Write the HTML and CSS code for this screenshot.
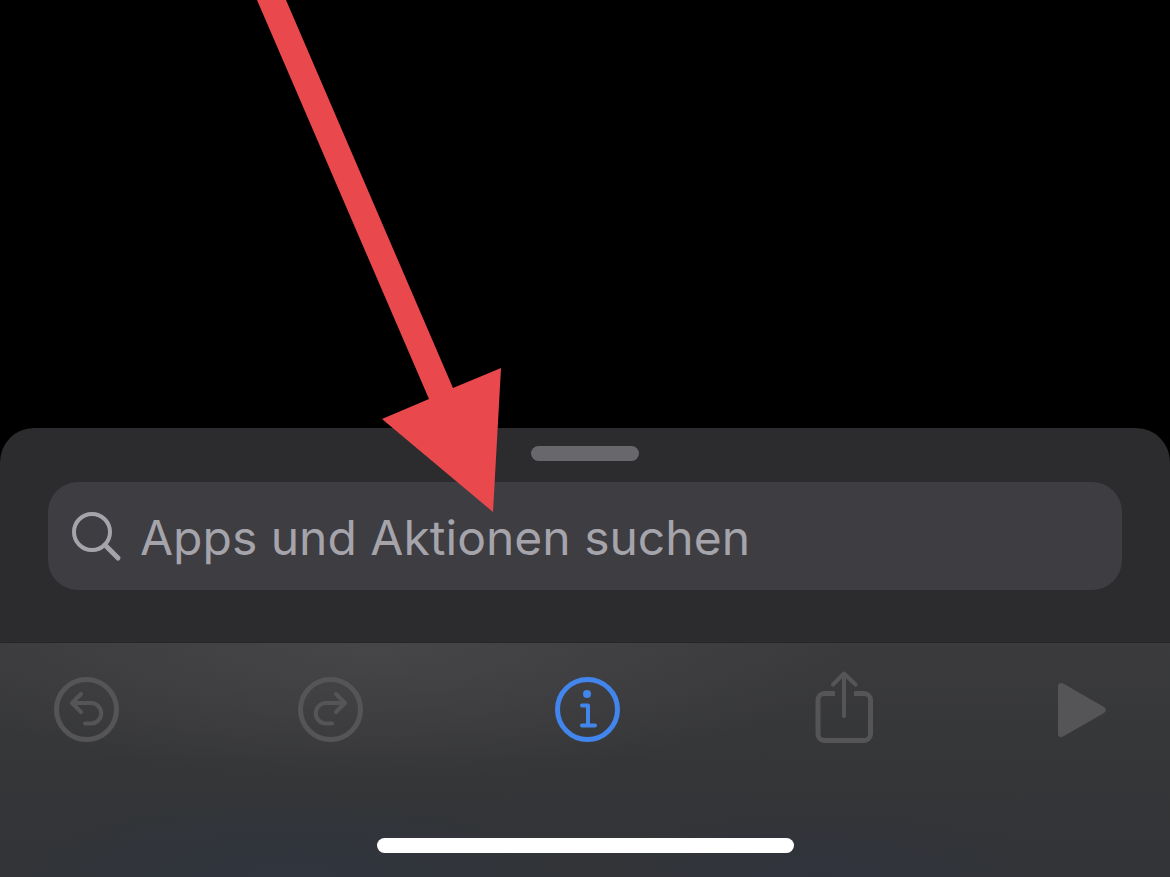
FILE: index.html
```
<!DOCTYPE html>
<html lang="de">
<head>
<meta charset="utf-8">
<meta name="viewport" content="width=device-width, initial-scale=1">
<title>Kurzbefehle</title>
<link rel="stylesheet" href="styles.css">
</head>
<body>
<main class="canvas"></main>
<section class="sheet">
  <div class="grabber"></div>
  <label class="search">
    <svg class="search-icon" viewBox="0 0 50 50" aria-hidden="true">
      <circle cx="20" cy="20" r="18"/>
      <path d="M33 33L46 46" class="handle"/>
    </svg>
    <input class="search-input" type="text" placeholder="Apps und Aktionen suchen" aria-label="Apps und Aktionen suchen">
  </label>
</section>
<footer class="footer">
  <nav class="toolbar">
    <button class="tool" type="button" aria-label="Widerrufen">
      <svg class="icon" viewBox="0 0 65 74"><circle cx="32.5" cy="39.5" r="30" class="ring"/><path d="M27 24L18 33L27 42M18 33H37A10 10 0 0 1 37 53.500H31"/></svg>
    </button>
    <button class="tool" type="button" aria-label="Wiederholen">
      <svg class="icon" viewBox="0 0 65 74"><circle cx="32.5" cy="39.5" r="30" class="ring"/><path d="M38 24L47 33L38 42M47 33H28A10 10 0 0 0 28 53.500H34"/></svg>
    </button>
    <button class="tool tool-active" type="button" aria-label="Info">
      <svg class="icon" viewBox="0 0 65 74"><circle cx="32.5" cy="39.5" r="30" class="ring"/><circle cx="32" cy="24" r="4" class="solid"/><path d="M27 35.500H33V55.500M27 55.500H40" class="stem"/></svg>
    </button>
    <button class="tool" type="button" aria-label="Teilen">
      <svg class="icon" viewBox="0 0 65 74"><path d="M23 23.5H12.500A6.500 6.500 0 0 0 6 30V64A6.500 6.500 0 0 0 12.500 70.500H52A6.500 6.500 0 0 0 58.500 64V30A6.500 6.500 0 0 0 52 23.500H42" class="tray"/><path d="M32 46V4M21 14.500L32 3.500L43.500 14.500"/></svg>
    </button>
    <button class="tool" type="button" aria-label="Ausführen">
      <svg class="icon" viewBox="0 0 65 74"><path class="solid" d="M8 16Q8 13 11 13Q12.500 13 14 14L54 37Q56 38.500 56 40Q56 41.500 54 43L14 66Q12.500 67 11 67Q8 67 8 64Z"/></svg>
    </button>
  </nav>
  <div class="home-bar"></div>
</footer>
<svg class="pointer" viewBox="0 0 502 513" aria-hidden="true"><path d="M257 0H286L453 388L501 368L493 512L382 419L429 399Z"/></svg>
</body>
</html>
```
FILE: styles.css
```
* {
  box-sizing: border-box;
}

body {
  margin: 0;
  min-height: 100vh;
  display: flex;
  flex-direction: column;
  position: relative;
  background: #000;
  font-family: Inter, "Liberation Sans", sans-serif;
}

.canvas {
  flex: 1;
}

.sheet {
  display: flex;
  flex-direction: column;
  gap: 21px;
  padding: 18px 48px 52px;
  background: #2c2c2e;
  border-bottom: 1px solid #262628;
  border-radius: 34px 34px 0 0;
}

.grabber {
  align-self: center;
  width: 108px;
  height: 15px;
  border-radius: 8px;
  background: #68676c;
}

.search {
  display: flex;
  align-items: center;
  gap: 18px;
  height: 108px;
  padding: 2px 24px 0;
  border-radius: 30px;
  background: #3e3d42;
}

.search-icon {
  flex: none;
  width: 50px;
  height: 50px;
  fill: none;
  stroke: #a5a4ab;
  stroke-width: 4;
  stroke-linecap: round;
}

.handle {
  stroke-width: 5;
}

.search-input {
  flex: 1;
  min-width: 0;
  height: 100%;
  padding: 0;
  border: 0;
  outline: 0;
  background: none;
  color: #a5a4ab;
  font: inherit;
  font-size: 48px;
}

.search-input::placeholder {
  color: #a5a4ab;
  opacity: 1;
}

.footer {
  display: flex;
  flex-direction: column;
  align-items: center;
  gap: 94px;
  padding: 27px 0 24px;
  background:
    radial-gradient(ellipse 40% 60% at 32% 0, #464548 0%, transparent 100%),
    radial-gradient(ellipse 25% 35% at 25% 100%, #30353f 0%, transparent 100%),
    radial-gradient(ellipse 20% 30% at 70% 100%, #30333d 0%, transparent 100%),
    linear-gradient(#3b3b3d, #353638 50%, #323437);
}

.toolbar {
  align-self: stretch;
  display: grid;
  grid-template-columns: 244fr 257fr 257fr 238fr 65px;
  padding: 0 55px 0 54px;
}

.tool {
  width: 65px;
  height: 74px;
  padding: 0;
  border: 0;
  background: none;
  color: #555557;
}

.tool-active {
  color: #4285ec;
}

.icon {
  display: block;
  width: 65px;
  height: 74px;
  fill: none;
  stroke: currentColor;
  stroke-width: 4;
  stroke-linecap: round;
  stroke-linejoin: round;
}

.ring {
  stroke-width: 5;
}

.stem {
  stroke-width: 4;
}

.tray {
  stroke-linecap: butt;
  stroke-width: 5;
}

.solid {
  fill: currentColor;
  stroke: none;
}

.home-bar {
  width: 417px;
  height: 15px;
  border-radius: 8px;
  background: #fff;
}

.pointer {
  position: absolute;
  top: 0;
  left: 0;
  width: 502px;
  height: 513px;
  fill: #e9484c;
  pointer-events: none;
}
```
